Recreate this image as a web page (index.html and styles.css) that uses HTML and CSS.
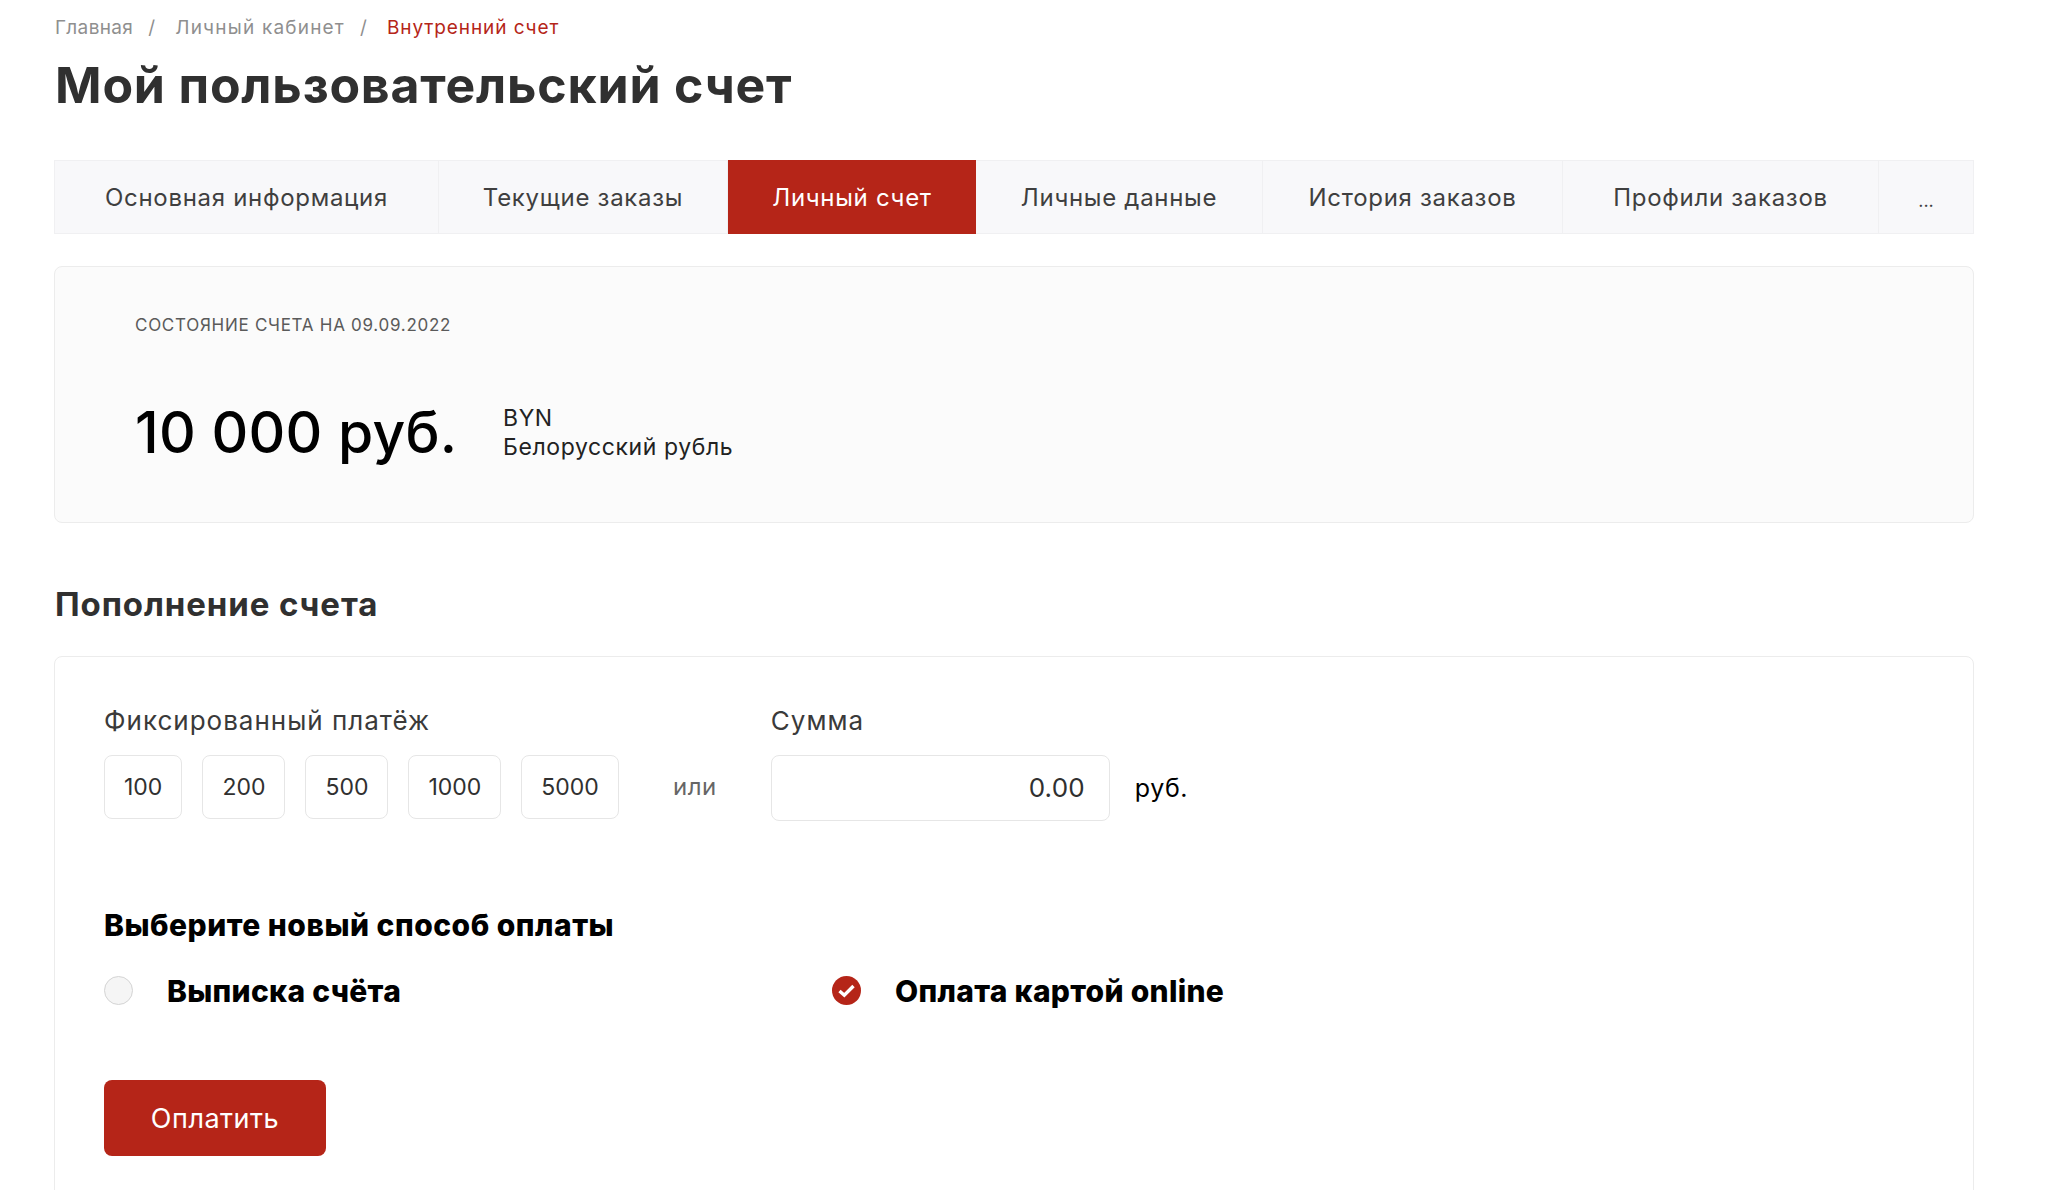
FILE: index.html
```html
<!DOCTYPE html>
<html lang="ru">
<head>
<meta charset="utf-8">
<title>Мой пользовательский счет</title>
<link rel="stylesheet" href="styles.css">
</head>
<body>
<main class="page">
  <nav class="crumbs">
    <a class="crumb">Главная</a><span class="sep">/</span>
    <a class="crumb">Личный кабинет</a><span class="sep">/</span>
    <span class="crumb current">Внутренний счет</span>
  </nav>
  <h1 class="title">Мой пользовательский счет</h1>
  <div class="tabs">
    <a class="tab">Основная информация</a>
    <a class="tab">Текущие заказы</a>
    <a class="tab active">Личный счет</a>
    <a class="tab">Личные данные</a>
    <a class="tab">История заказов</a>
    <a class="tab">Профили заказов</a>
    <a class="tab more">...</a>
  </div>
  <section class="balance">
    <div class="balance-label">СОСТОЯНИЕ СЧЕТА НА 09.09.2022</div>
    <div class="balance-row">
      <div class="amount">10 000 руб.</div>
      <div class="currency">BYN<br>Белорусский рубль</div>
    </div>
  </section>
  <h2 class="subtitle">Пополнение счета</h2>
  <section class="panel">
    <div class="sum-row">
      <div class="fixed">
        <div class="field-label">Фиксированный платёж</div>
        <div class="chips">
          <button class="chip">100</button>
          <button class="chip">200</button>
          <button class="chip">500</button>
          <button class="chip">1000</button>
          <button class="chip">5000</button>
        </div>
      </div>
      <div class="or">или</div>
      <div class="custom">
        <div class="field-label">Сумма</div>
        <div class="input-row">
          <div class="input">0.00</div>
          <span class="unit">руб.</span>
        </div>
      </div>
    </div>
    <h3 class="pay-title">Выберите новый способ оплаты</h3>
    <div class="methods">
      <div class="method">
        <span class="radio"></span>
        <span class="method-name">Выписка счёта</span>
      </div>
      <div class="method">
        <svg class="radio-on" viewBox="0 0 29 29" aria-hidden="true">
          <circle cx="14.5" cy="14.5" r="14.5" fill="#b52518"/>
          <path d="M7.5 15l4.8 4.2L21.5 10" fill="none" stroke="#fff" stroke-width="3.4"/>
        </svg>
        <span class="method-name">Оплата картой online</span>
      </div>
    </div>
    <button class="pay">Оплатить</button>
  </section>
</main>
</body>
</html>
```
FILE: styles.css
```css
* { box-sizing: border-box; }
html, body { margin: 0; height: 100%; }
body {
  background: #fff;
  color: #303030;
  font-family: Inter, "Noto Sans", "Liberation Sans", sans-serif;
  overflow: hidden;
}
.page { width: 1920px; margin-left: 54px; padding-top: 16px; }

.crumbs { display: flex; align-items: center; height: 22px; padding-left: 1px; font-size: 19px; letter-spacing: 1.2px; color: #8f8f8f; }
.crumb:first-child { letter-spacing: .35px; }
.sep { margin: 0 19px 0 15px; }
.current { color: #b52518; letter-spacing: .9px; }

.title { margin: 16px 0 0 1px; font-size: 50px; line-height: 62px; font-weight: 700; letter-spacing: .8px; color: #303030; }

.tabs {
  display: grid;
  grid-template-columns: 385px 289px 248px 287px 300px 316px 1fr;
  height: 74px;
  margin-top: 44px;
  background: #f8f8fa;
  border: 1px solid #f0f0f2;
  border-width: 1px 0;
}
.tab {
  display: flex; align-items: center; justify-content: center;
  font-size: 24px; letter-spacing: .7px; color: #3f3f3f;
  border-right: 1px solid #f0f0f2;
}
.tab:first-child { border-left: 1px solid #f0f0f2; }
.tab.active { margin: -1px 0; background: #b52518; color: #fff; border-right: 0; }
.tab.more { border-right: 1px solid #f0f0f2; font-size: 18px; letter-spacing: 0; padding-top: 6px; }

.balance {
  height: 257px;
  margin-top: 32px;
  padding: 46px 80px 0;
  background: #fbfbfb;
  border: 1px solid #ececec;
  border-radius: 8px;
}
.balance-label { font-size: 17px; line-height: 24px; letter-spacing: .72px; color: #5a5a5a; }
.balance-row { display: flex; align-items: center; margin-top: 61px; }
.amount { width: 368px; font-size: 57px; line-height: 70px; font-weight: 500; letter-spacing: .25px; color: #000; }
.currency { font-size: 23px; line-height: 29px; letter-spacing: .6px; color: #222; }

.subtitle { margin: 61px 0 0 1px; font-size: 33px; line-height: 40px; font-weight: 700; letter-spacing: .9px; color: #303030; }

.panel {
  height: 560px;
  margin-top: 32px;
  padding: 47px 49px 0;
  border: 1px solid #ececec;
  border-radius: 8px;
}
.sum-row { display: flex; align-items: flex-start; }
.field-label { font-size: 26px; line-height: 34px; letter-spacing: 1px; color: #3a3a3a; }
.chips { display: flex; gap: 20px; margin-top: 17px; }
.chip {
  height: 64px; padding: 0 19px;
  background: #fff; border: 1px solid #e6e6e6; border-radius: 8px;
  font: inherit; font-size: 23px; color: #303030;
}
.or { width: 152px; height: 64px; margin-top: 51px; line-height: 64px; text-align: center; font-size: 24px; letter-spacing: .5px; color: #666; }
.input-row { display: flex; align-items: center; gap: 25px; margin-top: 17px; }
.input {
  width: 339px; height: 66px; line-height: 64px; padding-right: 24px;
  text-align: right; font-size: 26px; letter-spacing: .2px; color: #303030;
  border: 1px solid #e6e6e6; border-radius: 8px;
}
.unit { font-size: 25px; letter-spacing: .6px; color: #000; }

.pay-title { margin: 84px 0 0; font-size: 30px; line-height: 40px; font-weight: 800; letter-spacing: .5px; color: #000; }
.methods { display: flex; margin-top: 31px; }
.method { display: flex; align-items: center; gap: 34px; width: 728px; height: 29px; }
.radio { flex: none; width: 29px; height: 29px; background: #f5f5f5; border: 1px solid #d4d4d4; border-radius: 50%; }
.radio-on { flex: none; width: 29px; height: 29px; }
.method-name { font-size: 30px; font-weight: 800; letter-spacing: .3px; color: #000; }
.pay {
  display: block;
  width: 222px; height: 76px; margin-top: 75px;
  background: #b52518; color: #fff; border: 0; border-radius: 8px;
  font: inherit; font-size: 27px; letter-spacing: .5px;
}
```
